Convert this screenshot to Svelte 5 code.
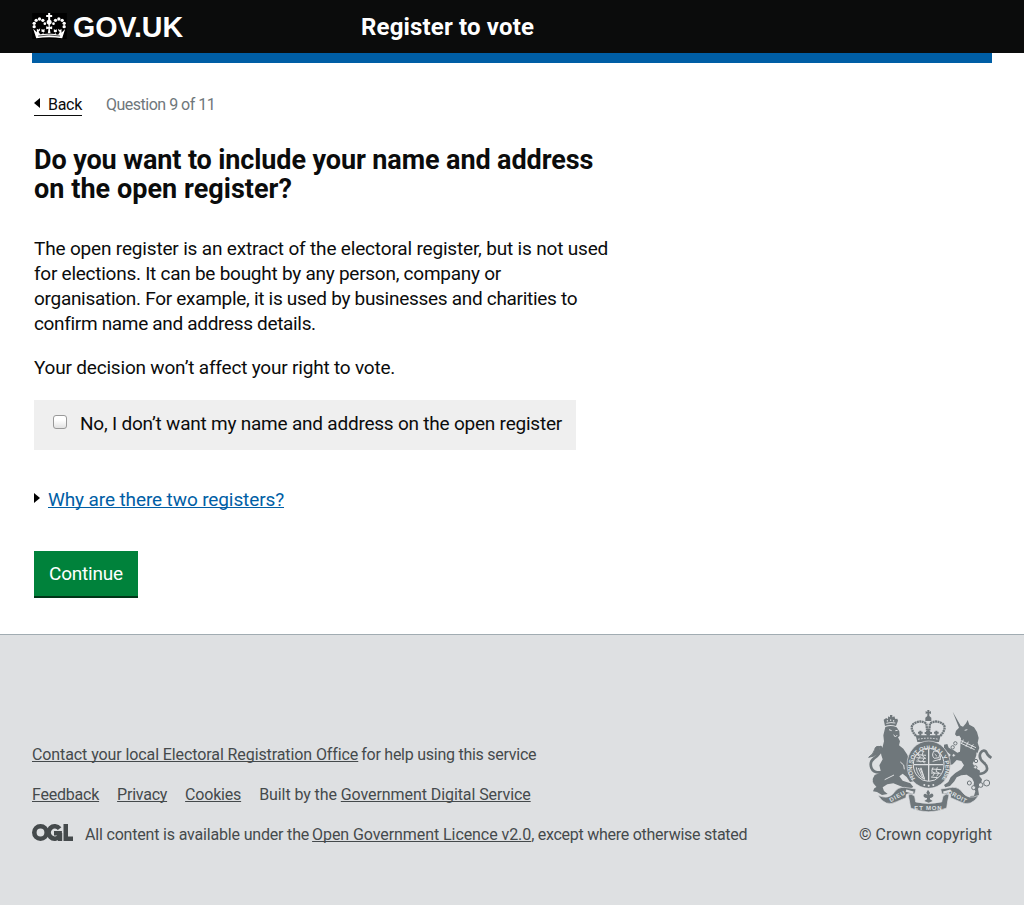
<script>
  const intro = [
    { text: 'The open register is an extract of the electoral register, but is not used', track: -0.172 },
    { text: 'for elections. It can be bought by any person, company or', track: -0.256 },
    { text: 'organisation. For example, it is used by businesses and charities to', track: -0.294 },
    { text: 'confirm name and address details.', track: -0.33 }
  ];
  const links = [
    { text: 'Feedback', track: -0.22 },
    { text: 'Privacy', track: -0.24 },
    { text: 'Cookies', track: -0.2 }
  ];
  // Pearls on the two arches of the header crown
  const pearls = [[43,79],[43,69],[49,60],[59,56],[69,60],[107,60],[117,56],[127,60],[133,69],[133,79]];
</script>

<header>
  <div class="bar">
    <a class="logo" href="#top">
      <svg width="35" height="26" viewBox="37 38 104 78" aria-hidden="true">
        <rect x="37" y="38" width="104" height="78" fill="#000"/>
        <g fill="#fff">
          {#each pearls as [x, y]}<circle cx={x} cy={y} r="5"/>{/each}
          <circle cx="75" cy="70" r="4"/><circle cx="101" cy="70" r="4"/>
          <path d="M85 38h6v6h6v6h-6v8a8 8 0 0 1-1 15v7l7-2v9l-7-2 2 14h-8l2-14-7 2v-9l7 2v-7a8 8 0 0 1-1-15v-8h-6v-6h6z"/>
          <path d="M49 113l-9-28 11 11v-11l5 3 5-4-1 7-4 3 5 8 7-1 2-6-5-1v-8l5 2 4-3v10l-4 1 1 5 10-1h14l10 1 1-5-4-1V86l4 3 5-2v8l-5 1 2 6 7 1 5-8-4-3-1-7 5 4 5-3v11l11-11-9 28q-39-6-78 0z"/>
        </g>
        <path d="M55 107q33-6 66 0" stroke="#000" stroke-width="2" fill="none"/>
      </svg>
      <span>GOV.UK</span>
    </a>
    <span class="service">Register to vote</span>
  </div>
</header>
<div class="stripe"></div>

<main>
  <nav>
    <a class="back" href="#back"><svg width="7" height="10" viewBox="0 0 7 10"><path d="M6 0v10L0 5z"/></svg><span>Back</span></a>
    <span class="step">Question 9 of 11</span>
  </nav>
  <h1><span class="h1a">Do you want to include your name and address</span><span class="h1b">on the open register?</span></h1>
  <p>{#each intro as line}<span class="line" style="letter-spacing:{line.track}px">{line.text}</span>{/each}</p>
  <p class="decision">Your decision won’t affect your right to vote.</p>
  <label><input type="checkbox"><span>No, I don’t want my name and address on the open register</span></label>
  <div class="why"><svg width="6" height="10" viewBox="0 0 6 10"><path d="M0 0v10l6-5z"/></svg><a href="#why">Why are there two registers?</a></div>
  <button>Continue</button>
</main>

<footer>
  <div class="inner">
    <div class="meta">
      <div class="row"><a class="contact" href="#contact">Contact your local Electoral Registration Office</a><span class="help">for help using this service</span></div>
      <div class="row list">
        {#each links as l}<a href="#{l.text}" style="letter-spacing:{l.track}px">{l.text}</a>{/each}
        <span class="built">Built by the <a href="#gds">Government Digital Service</a></span>
      </div>
      <div class="row">
        <svg class="ogl" width="41" height="17" viewBox="0 0 41 17" aria-label="OGL">
          <g fill="none" stroke="#454a4c" stroke-width="4.6"><circle cx="8.5" cy="8.5" r="6.2"/><path d="M27.6 4.6A6.2 6.2 0 1 0 27.6 12.4V9.2H22"/></g>
          <path d="M31.5 0H36v12.5h5V17h-9.500zM26 9h4.200v8H26z" fill="#454a4c"/>
        </svg>
        <span class="all">All content is available under the</span><a class="licence" href="#ogl">Open Government Licence v2.0</a><span class="except">, except where otherwise stated</span>
      </div>
    </div>
    <a class="copyright" href="#crown">
      <svg width="125" height="102" viewBox="21 18 375 306" aria-hidden="true">
        <g fill="#6f777b">
          <!-- lion -->
          <path d="M75 66L71 47L79 42L83 46L85 37L90 40V33H97V40L103 37L106 45L112 44L114 50L108 66Q91 60 75 66Z"/>
          <path d="M76 69Q94 62 110 70L118 82L119 96L114 100L120 112L117 124L130 134L142 152L146 164L153 178L155 195L150 205L157 214L160 232L150 234L140 219L128 209L118 217L128 230L151 238L160 249L148 255L128 249L100 238L82 241L68 250L72 261L83 270L66 273L51 264L39 262L43 253L56 245L52 232L38 235L40 222L54 213L62 200L58 184L68 166L64 154L62 140L68 128L72 112L70 94Z"/>
          <path d="M66 204L44 213L38 225L40 238L52 252L64 246L62 232L84 222Z"/>
        </g>
        <g fill="none" stroke="#6f777b" stroke-linecap="round" stroke-linejoin="round">
          <path d="M64 205Q40 207 34 191Q28 174 42 163Q66 148 62 129" stroke-width="8"/>
          <path d="M60 128Q46 124 44 137Q40 151 26 160Q44 158 56 148Z" fill="#6f777b" stroke-width="3"/>
        </g>
        <g fill="#6f777b">
          <!-- unicorn -->
          <path d="M278 23L302 65L309 68L318 58L323 48L328 62L342 70L351 84L356 102L353 116L358 132L352 148L344 140L326 136L302 121L303 103L298 95L290 97L285 91L288 80L297 71Z"/>
          <path d="M302 113L350 136L349 154L344 168L338 178L346 192L360 200L358 216L366 226L362 243L354 254L357 272L346 285L330 284L331 276L342 275L346 262L340 250L342 235L336 223L320 212L304 214L290 220L283 232L270 246L256 250L252 243L265 234L272 220L286 207L304 196L312 184L304 171L290 168L278 181L264 185L261 178L274 166L279 158L262 144L252 133V122L262 120L266 131L280 138L292 146L300 143Z"/>
          <path d="M290 150L277 148L265 161L266 176L273 178L278 164L291 163Z"/>
        </g>
        <path d="M353 209Q371 212 380 199Q385 187 370 175Q354 161 362 146Q369 136 378 143Q381 153 394 162" fill="none" stroke="#6f777b" stroke-width="8"/>
        <g fill="#6f777b">
          <!-- crown -->
          <path d="M197 21l5 3V18h6v6l5-3v9l-5-2v8l6 5v10h-18V41l6-5v-8l-5 2zM167 94h75l-5 20h-65z"/>
        </g>
        <g fill="none" stroke="#6f777b">
          <path d="M168 96q-23-27-5-38 18-11 36 0l4 38M241 96q23-27 5-38-18-11-36 0l-4 38" stroke-width="7" stroke-dasharray="6 1.500"/>
          <path d="M181 80v15M229 80v15M174 86h14M222 86h14M194 87h22M205 78v17" stroke-width="6"/>
        </g>
        <path d="M174 106q31-7 62 0" stroke="#dee0e2" stroke-width="3" stroke-dasharray="5 4" fill="none"/>
        <!-- garter and shield -->
        <ellipse cx="206" cy="182" rx="65" ry="71" fill="#6f777b" stroke="#dee0e2" stroke-width="2"/>
        <ellipse cx="206" cy="182" rx="46" ry="50" fill="none" stroke="#dee0e2" stroke-width="3"/>
        <defs><path id="garter" d="M166 224A50 55 0 1 1 247 224"/></defs>
        <text class="motto"><textPath href="#garter" textLength="236">HONI SOIT QUI MAL Y PENSE</textPath></text>
        <g fill="none" stroke="#dee0e2" stroke-width="3">
          <path d="M206 134v97M162 182h88" stroke-width="4"/>
          <path d="M171 152l27 2M169 161l29 2M169 171l28 2M178 145l-5 8 8 5-7 9 8 8M190 142l-4 12 8 7-6 10 6 7M222 141q-9 13 1 22l14-2q6-11-5-19zM218 172l25-7M224 150l7 7M243 153l-4 16M169 190q2 25 25 36l-11-35M175 192l14 31M180 192l12 29M219 190l-4 12 9 5-6 10M232 190l-4 12 9 5-7 10M215 195l29 2M213 207l29 1M213 219l20 2"/>
        </g>
        <g fill="#dee0e2"><circle cx="193" cy="243" r="3"/><circle cx="206" cy="245" r="3"/><circle cx="220" cy="243" r="3"/></g>
        <!-- animal details -->
        <g fill="none" stroke="#dee0e2" stroke-width="3">
          <path d="M79 58q14-4 27-1M82 48v5M92 46v5M101 48v5"/>
          <path d="M87 77l8 3M106 80l7-1M101 92l5 7 6-6M121 174l10 9 2 13M74 227l28-14M322 77l-8 2M301 109l47 22M301 117l43 20M310 107l-6 13M325 113l-7 15M340 121l-8 13"/>
        </g>
        <g fill="#dee0e2" stroke="#6f777b" stroke-width="3"><circle cx="286" cy="118" r="5"/><circle cx="278" cy="130" r="5"/><circle cx="281" cy="154" r="5"/><circle cx="348" cy="171" r="5"/><circle cx="346" cy="190" r="5"/><circle cx="328" cy="237" r="6"/><circle cx="341" cy="251" r="6"/><circle cx="362" cy="243" r="7"/><circle cx="380" cy="237" r="9"/></g>
        <!-- scroll -->
        <g fill="#6f777b" stroke="#dee0e2" stroke-width="2">
          <path d="M54 274q31 14 48-8 11-17 31-16l35 5-4 15-19-1q-9 0-7 12l-28 12q-34 18-56-19z"/>
          <path d="M356 274q-31 14-48-8-11-17-31-16l-35 5 4 15 19-1q9 0 7 12l28 12q34 18 56-19z"/>
          <path d="M145 273q8-7 19 4l3 17q38 9 78 0l4-17q10-11 18-4-4 15-7 39-55 23-108 0z"/>
        </g>
        <path d="M160 266l-22-6M250 266l22-6" stroke="#dee0e2" stroke-width="7"/>
        <path d="M204 257l6 9-2 8q7-9 11-3 4 7-5 10l-4 1v4l8 5-12 5-13-5 8-5v-4q-13-2-10-10 5-6 12 2l-4-8z" fill="#6f777b"/>
        <g class="scroll">
          <text x="204" y="317" text-anchor="middle" textLength="82">ET MON</text>
          <text transform="translate(92 295) rotate(-29)" textLength="51">DIEU</text>
          <text transform="translate(262 268) rotate(28)" textLength="61">DROIT</text>
        </g>
      </svg>
      <span>© Crown copyright</span>
    </a>
  </div>
</footer>

<style>
  :global(body) { margin: 0; background: #fff; color: #0b0c0c; font-family: Roboto, "Liberation Sans", sans-serif; }
  header { height: 53px; background: #0b0c0c; }
  .bar { margin: 0 32px; height: 53px; display: flex; align-items: center; }
  .logo { width: 329px; display: flex; align-items: center; gap: 6px; color: #fff; text-decoration: none; font: bold 28.6px/32px "Liberation Sans", sans-serif; }
  .logo svg { display: block; margin-bottom: 2px; }
  .service { color: #fff; font-size: 24px; font-weight: 700; letter-spacing: .16px; line-height: 30px; }
  .stripe { height: 10px; margin: 0 32px; background: #005ea5; }
  main { padding: 31px 34px 36px; font-size: 19px; line-height: 25px; }
  nav { display: flex; gap: 24px; height: 22px; font-size: 16px; line-height: 22px; }
  .back { width: 48px; box-sizing: border-box; border-bottom: 1px solid #0b0c0c; color: #0b0c0c; text-decoration: none; display: flex; gap: 7px; letter-spacing: -.3px; }
  .back svg { margin-top: 4px; }
  .step { color: #6f777b; letter-spacing: -.5px; }
  h1 { margin: 30px 0 32px; font-size: 27px; line-height: 29px; }
  h1 span, .line { display: block; white-space: nowrap; }
  .h1a { letter-spacing: -.11px; }
  .h1b { letter-spacing: .04px; }
  p { margin: 0 0 19px; }
  .decision { letter-spacing: -.196px; margin-bottom: 20px; }
  label { width: 542px; height: 50px; box-sizing: border-box; padding: 11px 0 0 19px; background: #efefef; display: flex; gap: 13px; letter-spacing: -.221px; white-space: nowrap; }
  input { appearance: none; width: 14px; height: 14px; box-sizing: border-box; margin: 4px 0 0; border: 1px solid #999; border-radius: 3px; background: linear-gradient(#fff 35%, #e2e2e2); }
  .why { display: flex; gap: 8px; margin-top: 37px; letter-spacing: -.114px; }
  .why svg { margin-top: 6px; }
  .why a { color: #005ea5; }
  a { text-underline-offset: 1px; text-decoration-thickness: 1px; text-decoration-skip-ink: none; }
  button { display: block; margin: 39px 0 0; width: 104px; height: 47px; padding: 0; border: 0; border-bottom: 2px solid #003618; background: #00823b; color: #fff; font: 19px/45px Roboto, sans-serif; letter-spacing: -.2px; }
  footer { box-sizing: border-box; height: 271px; border-top: 1px solid #a1acb2; background: #dee0e2; color: #454a4c; font-size: 16px; line-height: 20px; }
  footer a { color: #454a4c; }
  .inner { margin: 0 32px; padding-top: 75px; display: flex; justify-content: space-between; }
  .meta { padding-top: 35px; display: flex; flex-direction: column; gap: 20px; }
  .row { display: flex; white-space: nowrap; height: 20px; }
  .list { gap: 18px; }
  .contact { letter-spacing: -.095px; margin-right: 3px; }
  .help { letter-spacing: -.256px; }
  .built { letter-spacing: -.08px; }
  .ogl { margin: -1px 12px 0 0; }
  .all { letter-spacing: -.18px; margin-right: 3px; }
  .licence { letter-spacing: -.075px; }
  .except { letter-spacing: -.26px; }
  .copyright { display: flex; flex-direction: column; align-items: flex-end; gap: 13px; text-decoration: none; letter-spacing: .03px; }
  .motto { font: bold 18px "Liberation Sans", sans-serif; fill: #dee0e2; }
  .scroll { font: bold 18px "Liberation Sans", sans-serif; fill: #dee0e2; }
</style>
